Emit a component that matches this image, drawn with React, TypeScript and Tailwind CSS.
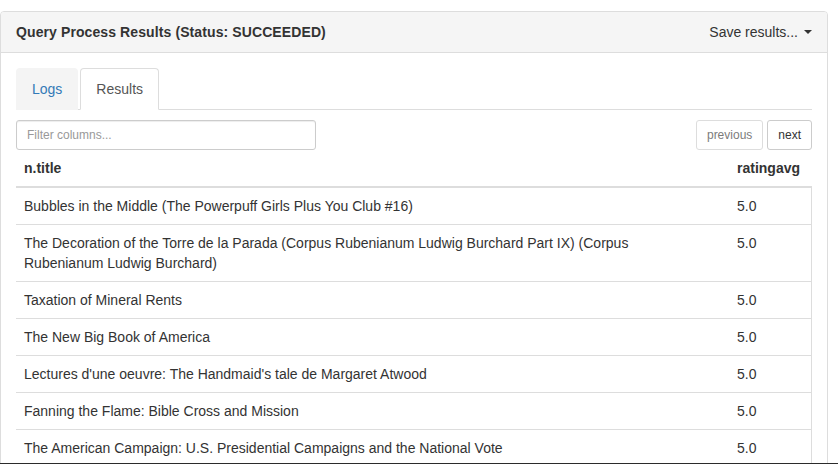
import React from "react";

const rows: { title: React.ReactNode; rating: string }[] = [
  { title: "Bubbles in the Middle (The Powerpuff Girls Plus You Club #16)", rating: "5.0" },
  {
    title: (
      <>
        The Decoration of the Torre de la Parada (Corpus Rubenianum Ludwig Burchard Part IX) (Corpus
        <br />
        Rubenianum Ludwig Burchard)
      </>
    ),
    rating: "5.0",
  },
  { title: "Taxation of Mineral Rents", rating: "5.0" },
  { title: "The New Big Book of America", rating: "5.0" },
  { title: "Lectures d'une oeuvre: The Handmaid's tale de Margaret Atwood", rating: "5.0" },
  { title: "Fanning the Flame: Bible Cross and Mission", rating: "5.0" },
  { title: "The American Campaign: U.S. Presidential Campaigns and the National Vote", rating: "5.0" },
];

const font = { fontFamily: '"Liberation Sans", Arial, Helvetica, sans-serif' };

export default function App() {
  return (
    <div
      className="relative h-[464px] w-[838px] overflow-hidden bg-white text-[14px] leading-5 text-[#333]"
      style={font}
    >
      <div className="pt-[11px]">
        <div className="w-[828px] rounded-t-[4px] border border-[#ddd] bg-white">
          {/* heading */}
          <div className="flex items-center justify-between rounded-t-[3px] border-b border-[#ddd] bg-[#f5f5f5] px-[15px] py-[10px]">
            <div className="text-[14px] font-bold leading-5 tracking-[0.1px] text-[#333]">
              Query Process Results (Status: SUCCEEDED)
            </div>
            <div className="flex items-center text-[14px] leading-5 text-[#333]">
              <span>Save results...</span>
              <span className="ml-[6px] inline-block h-0 w-0 border-x-[4px] border-t-[4px] border-x-transparent border-t-[#333]" />
            </div>
          </div>
          {/* body */}
          <div className="p-[15px]">
            {/* tabs */}
            <div className="flex border-b border-[#ddd]">
              <div className="-mb-px mr-[2px] rounded-t-[4px] border border-transparent bg-[#f4f4f4] px-[15px] py-[10px] text-[#337ab7]">
                Logs
              </div>
              <div className="-mb-px rounded-t-[4px] border border-[#ddd] border-b-white bg-white px-[15px] py-[10px] text-[#555]">
                Results
              </div>
            </div>
            {/* controls */}
            <div className="mt-[10px] flex items-center justify-between">
              <input
                className="h-[30px] w-[300px] rounded-[3px] border border-[#ccc] px-[10px] text-[12px] text-[#555] shadow-[inset_0_1px_1px_rgba(0,0,0,0.075)] outline-none placeholder:text-[#999]"
                placeholder="Filter columns..."
                style={font}
              />
              <div className="flex gap-[4px]">
                <button
                  className="h-[30px] rounded-[3px] border border-[#ccc] bg-white px-[10px] text-[12px] leading-[18px] text-[#333] opacity-65"
                  style={font}
                >
                  previous
                </button>
                <button
                  className="h-[30px] rounded-[3px] border border-[#ccc] bg-white px-[10px] text-[12px] leading-[18px] text-[#333]"
                  style={font}
                >
                  next
                </button>
              </div>
            </div>
            {/* table */}
            <div>
              <div className="flex border-b-2 border-[#ddd] font-bold">
                <div className="flex-1 p-2">n.title</div>
                <div className="w-[83px] p-2">ratingavg</div>
              </div>
              <div className="border-r border-[#ddd]">
                {rows.map((r, i) => (
                  <div key={i} className="flex border-b border-[#ddd]">
                    <div className="flex-1 p-2">{r.title}</div>
                    <div className="w-[82px] p-2">{r.rating}</div>
                  </div>
                ))}
              </div>
            </div>
          </div>
        </div>
      </div>
      <div className="absolute bottom-0 left-0 h-px w-full bg-[#2b2b2b]" />
    </div>
  );
}
